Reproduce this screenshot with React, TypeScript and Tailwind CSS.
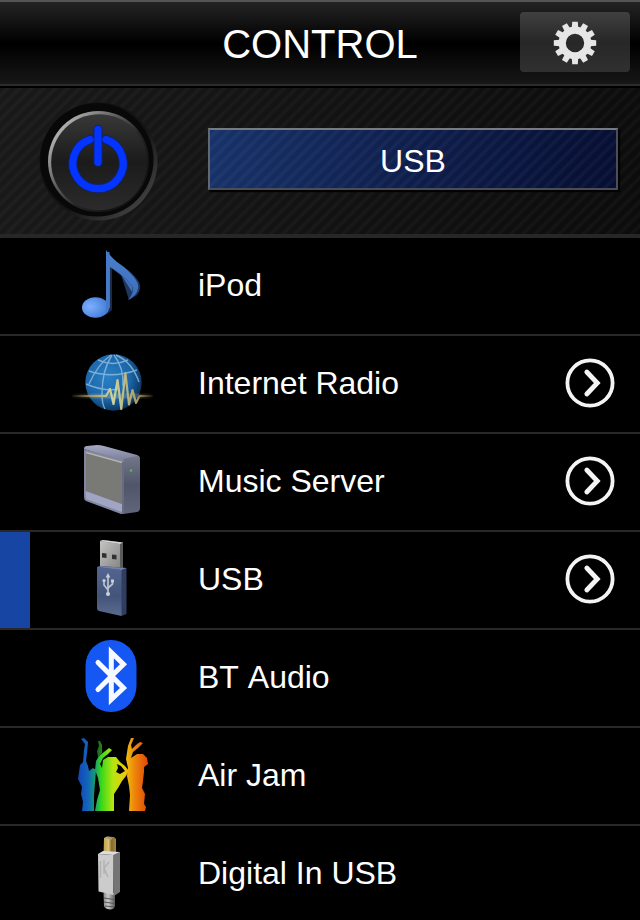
import type { ReactNode } from "react";

interface Source {
  name: string;
  icon: ReactNode;
  more?: boolean;
}

function NoteIcon() {
  return (
    <>
      <defs>
        <linearGradient id="noteFlag" x1="0" y1="0" x2="0" y2="1">
          <stop offset="0" stopColor="#4c80cc" />
          <stop offset="1" stopColor="#3769b8" />
        </linearGradient>
        <radialGradient id="noteHead" cx="0.3" cy="0.45" r="0.75">
          <stop offset="0" stopColor="#7fb0ff" />
          <stop offset="1" stopColor="#3d78d2" />
        </radialGradient>
      </defs>
      <path d="M50 28 L52 29 V72 L47 76 Z" fill="#1b2c4a" />
      <path d="M57 24 Q73 34 79 44 Q82 51 77 57 L69 62 Z" fill="#1f365e" />
      <path
        d="M46 12 Q50 18 57 24 Q70 33 76 42 Q81 50 75 57 Q72 60 68 62 Q75 54 72 48 Q66 39 50 29 L50 70 L46 70 Z"
        fill="url(#noteFlag)"
      />
      <path d="M50 29 Q66 39 72 48 Q73 51 72 54 L62 38 Z" fill="#3e6fb8" />
      <ellipse cx="35.5" cy="69.5" rx="13.5" ry="10.2" fill="url(#noteHead)" />
      <path d="M46 14 H49.5 V70 L46 74 Z" fill="#4679c8" />
    </>
  );
}

function GlobeIcon() {
  return (
    <>
      <defs>
        <radialGradient id="globe" cx="0.4" cy="0.4" r="0.62">
          <stop offset="0" stopColor="#2b80c6" />
          <stop offset="0.65" stopColor="#1c65a8" />
          <stop offset="1" stopColor="#0c365f" />
        </radialGradient>
        <linearGradient id="wave" gradientUnits="userSpaceOnUse" x1="12" y1="0" x2="93" y2="0">
          <stop offset="0" stopColor="#8a7a45" stopOpacity="0.1" />
          <stop offset="0.25" stopColor="#a39b6e" />
          <stop offset="0.5" stopColor="#cdd4a0" />
          <stop offset="0.8" stopColor="#a89e6c" />
          <stop offset="1" stopColor="#8a7a45" stopOpacity="0.1" />
        </linearGradient>
      </defs>
      <circle cx="53.5" cy="46.5" r="28.2" fill="url(#globe)" />
      <g fill="none" stroke="#8fbfe2" strokeWidth="1.4" opacity="0.8">
        <path d="M38 24 Q53 31 68 24" />
        <path d="M29 35 Q52 43 77 34" />
        <path d="M26 48 Q45 56 60 53" />
        <path d="M51 19 Q38 28 29 48" />
        <path d="M52 19 Q42 34 42 58 Q42 68 45 73" />
        <path d="M54 19 Q64 32 63 50" />
        <path d="M56 19 Q72 26 79 46" />
      </g>
      <path d="M12 60 H93" stroke="url(#wave)" strokeWidth="5" opacity="0.3" />
      <path
        d="M12 60 H46 L50 53 L53.5 68 L57.5 44 L61.3 73 L65.4 37 L69 68.5 L72.5 54 L76 67 L79.5 60 H93"
        fill="none"
        stroke="url(#wave)"
        strokeWidth="2.2"
        strokeLinejoin="round"
      />
    </>
  );
}

function ServerIcon() {
  return (
    <>
      <defs>
        <linearGradient id="serverTop" x1="0" y1="0" x2="0" y2="1">
          <stop offset="0" stopColor="#a6a9c4" />
          <stop offset="1" stopColor="#777a94" />
        </linearGradient>
        <linearGradient id="serverSide" x1="0" y1="0" x2="0" y2="1">
          <stop offset="0" stopColor="#737789" />
          <stop offset="0.5" stopColor="#515569" />
          <stop offset="1" stopColor="#62667c" />
        </linearGradient>
      </defs>
      <path d="M24 15 Q24 12 27 12 L37 11 Q40 11 44 12 L77 21 Q80 22 80 25 L64 28 Z" fill="url(#serverTop)" />
      <path d="M62 28 Q64 24 68 24 L77 22 Q80 23 80 27 V74 Q80 77 77 78 L63 80 Z" fill="url(#serverSide)" />
      <path d="M24 15 L61 25 Q64 26 64 29 V79 Q63 80 61 80 L26 67 Q24 66 24 63 Z" fill="#8286a2" />
      <path d="M25.5 57 L62 70 V78 L26 65 Z" fill="#a1a5c4" />
      <path d="M26 18.5 L62 28.5 V70 L26 57 Z" fill="#797976" />
      <path d="M26 18.5 L62 28.5" stroke="#b3b3aa" strokeWidth="1.3" />
      <path d="M63 28 V79" stroke="#4c5065" strokeWidth="1" />
      <circle cx="71" cy="36.5" r="1.3" fill="#4fc04e" />
    </>
  );
}

function UsbStickIcon() {
  return (
    <>
      <defs>
        <linearGradient id="plug" x1="0" y1="0" x2="1" y2="1">
          <stop offset="0" stopColor="#c4c4c2" />
          <stop offset="1" stopColor="#858585" />
        </linearGradient>
        <linearGradient id="stick" x1="0" y1="0" x2="0" y2="1">
          <stop offset="0" stopColor="#546690" />
          <stop offset="0.6" stopColor="#43547a" />
          <stop offset="1" stopColor="#5b6b90" />
        </linearGradient>
      </defs>
      <path d="M40 9 L43 8 L63 10.5 V37 L40 36 Z" fill="#5a5a5a" />
      <path d="M40 9 L60 12 V37 L40 35 Z" fill="url(#plug)" />
      <path d="M40 9 L43 8 L63 10.5 L60 12 Z" fill="#d6d6d4" />
      <path d="M42 21 L46.5 21.5 V26 L42 25.5 Z M52 22.5 L56.5 23 V27.5 L52 27 Z" fill="#303030" />
      <path d="M37 35 L41 34 L66.5 36 V82 L61.5 84 Z" fill="#2f3e60" />
      <path d="M37 35 L61.5 38 V84 L39 79 Q37 78.5 37 76 Z" fill="url(#stick)" />
      <path d="M37 35 L41 34 L66.5 36 L61.5 38 Z" fill="#7182aa" />
      <path
        d="M48 43 V62 M48 58 L44 53 V48.5 M48 56 L52.5 52 V48.5"
        fill="none"
        stroke="#b9c1d0"
        strokeWidth="1.7"
      />
      <path d="M45.6 45.5 L48 41 L50.4 45.5 Z" fill="#c8cfdb" />
      <circle cx="48" cy="62" r="2.1" fill="#c8cfdb" />
      <circle cx="44" cy="48.5" r="1.6" fill="#c8cfdb" />
      <rect x="51" y="47.5" width="3" height="3" fill="#c8cfdb" />
    </>
  );
}

function BluetoothIcon() {
  return (
    <>
      <rect x="25.5" y="10" width="51" height="72" rx="25" ry="26" fill="#1557f2" />
      <path
        d="M38 32.5 L63.5 58 L51.3 69.5 V22.5 L63.5 34.3 L38 59.5"
        fill="none"
        stroke="#f6f9ff"
        strokeWidth="5"
        strokeLinecap="round"
      />
    </>
  );
}

function DancersIcon() {
  return (
    <>
      <defs>
        <linearGradient id="rainbow" gradientUnits="userSpaceOnUse" x1="18" y1="0" x2="88" y2="0">
          <stop offset="0" stopColor="#1245b8" />
          <stop offset="0.14" stopColor="#1464bd" />
          <stop offset="0.24" stopColor="#159a72" />
          <stop offset="0.33" stopColor="#35d81a" />
          <stop offset="0.5" stopColor="#b5e60f" />
          <stop offset="0.67" stopColor="#ecc90d" />
          <stop offset="0.8" stopColor="#ee880b" />
          <stop offset="1" stopColor="#df4808" />
        </linearGradient>
      </defs>
      <g fill="url(#rainbow)">
        <path d="M21 11 L24 10 L28 14 L27 25 L26 33 L28 38 L29 43 L33 40 L36 42 L35 55 L34 67 L34 83 H22 L23 74 L21 66 L22 59 L18 51 L20 37 L23 34 L24 22 L25 16 Z" />
        <path d="M38 13 L40 13 L42 17 L42 25 L38 29 L37 23 L39 18 Z" opacity="0.6" />
        <path d="M35 83 L37 72 L40 62 L38 50 L35 42 L36 33 L39 28 L44 24 L49 20 L52 22 L48 26 L43 30 L40 36 L42 40 L43 32 L48 29 L56 29 L60 34 L65 38 L69 43 L66 48 L62 53 L58 60 L54 66 L54 83 Z M57 36 L58 40 L56 44 L60 46 L65 43 L61 38 Z" fillRule="evenodd" />
        <path d="M66 31 L68 18 L71 10 L74 10 L71 17 L72 21 L76 17 L80 14 L83 15 L78 20 L73 24 L71 30 L77 26 L83 26 L87 30 L88 36 L84 39 L84 44 L83 53 L82 60 L85 66 L84 76 L86 79 L85 83 H69 L70 67 L69 58 L67 48 L68 40 Z" />
      </g>
    </>
  );
}

function CableIcon() {
  return (
    <>
      <defs>
        <linearGradient id="gold" x1="0" y1="0" x2="1" y2="0">
          <stop offset="0" stopColor="#c0a14c" />
          <stop offset="0.4" stopColor="#dcc078" />
          <stop offset="0.65" stopColor="#85692b" />
          <stop offset="1" stopColor="#a5873f" />
        </linearGradient>
        <linearGradient id="cord" x1="0" y1="0" x2="1" y2="0">
          <stop offset="0" stopColor="#8b8b8b" />
          <stop offset="0.4" stopColor="#c9c9c9" />
          <stop offset="1" stopColor="#555555" />
        </linearGradient>
      </defs>
      <path d="M44 12 L47 10.5 L54 11 L56 13 V28 H43.5 Z" fill="url(#gold)" />
      <path d="M45 12 L48 11 L53 11.5 L51 14 Z" fill="#a69b7c" />
      <path d="M43.5 67 H55 V80 Q54 83.5 50 83.5 Q45 83 44 80 Z" fill="url(#cord)" />
      <path d="M44 72 L54 73.5 M44 76 L54 77.5 M45 80 L54 81" stroke="#555555" strokeWidth="1" />
      <path d="M53.5 29 L60 26 V66 L54 70 Z" fill="#757575" />
      <path d="M38 28 L53.5 29 V69 L38.5 65.5 Z" fill="#cccccc" />
      <path d="M38 28 L43 25 L60 26 L53.5 29 Z" fill="#dddddd" />
      <path d="M40.5 35 V52 M49 36 L44 42 L48 51 M44 34 V48" fill="none" stroke="#b2b2b2" strokeWidth="1.5" />
    </>
  );
}

const sources: Source[] = [
  { name: "iPod", icon: <NoteIcon /> },
  { name: "Internet Radio", icon: <GlobeIcon />, more: true },
  { name: "Music Server", icon: <ServerIcon />, more: true },
  { name: "USB", icon: <UsbStickIcon />, more: true },
  { name: "BT Audio", icon: <BluetoothIcon /> },
  { name: "Air Jam", icon: <DancersIcon /> },
  { name: "Digital In USB", icon: <CableIcon /> },
];

const teeth = [0, 30, 60, 90, 120, 150, 180, 210, 240, 270, 300, 330];

function GearIcon() {
  return (
    <svg className="mt-[2px]" width="44" height="44" viewBox="-22 -22 44 44">
      <circle r="12.8" fill="none" stroke="#e6e6e6" strokeWidth="7.2" />
      {teeth.map((angle) => (
        <path key={angle} d="M-3.2 -15 L-2.8 -21.2 H2.8 L3.2 -15 Z" fill="#e6e6e6" transform={`rotate(${angle})`} />
      ))}
    </svg>
  );
}

function PowerButton() {
  return (
    <button type="button" className="ml-[38px] block size-[122px] shrink-0" aria-label="Power">
      <svg width="122" height="122" viewBox="38 101 122 122">
        <defs>
          <linearGradient id="well" x1="0.1" y1="0.1" x2="0.9" y2="0.9">
            <stop offset="0" stopColor="#0b0b0b" />
            <stop offset="0.6" stopColor="#151515" />
            <stop offset="1" stopColor="#454545" />
          </linearGradient>
          <linearGradient id="rim" x1="0.05" y1="0.2" x2="0.75" y2="0.8">
            <stop offset="0" stopColor="#b8b8b8" />
            <stop offset="0.35" stopColor="#6a6a6a" />
            <stop offset="0.7" stopColor="#262626" />
            <stop offset="1" stopColor="#151515" />
          </linearGradient>
          <linearGradient id="knob" x1="0" y1="0" x2="0" y2="1">
            <stop offset="0" stopColor="#383838" />
            <stop offset="0.5" stopColor="#1b1b1b" />
            <stop offset="1" stopColor="#2b2b2b" />
          </linearGradient>
        </defs>
        <circle cx="98.5" cy="161.5" r="59" fill="url(#well)" />
        <circle cx="97" cy="160" r="56.5" fill="#080808" />
        <circle cx="98.5" cy="161.5" r="50.5" fill="url(#rim)" />
        <circle cx="99.2" cy="162.2" r="48" fill="url(#knob)" />
        <g fill="none" strokeLinecap="round">
          <path d="M90 139.5 A25.2 25.2 0 1 0 106 139.5 M98 129.3 V162.3" stroke="#10226b" strokeWidth="9" />
          <path d="M90 139.5 A25.2 25.2 0 1 0 106 139.5 M98 129.3 V162.3" stroke="#0434ff" strokeWidth="7.2" />
        </g>
      </svg>
    </button>
  );
}

function MoreIcon() {
  return (
    <svg
      className="mr-[24px] mb-[2px] shrink-0"
      width="52"
      height="52"
      viewBox="-26 -26 52 52"
      fill="none"
      stroke="#f4f4f4"
    >
      <circle r="22.6" strokeWidth="3.8" />
      <path d="M-3.2 -11 L7.3 0 L-3.2 11" strokeWidth="4.8" strokeLinecap="round" />
    </svg>
  );
}

export default function App() {
  const selected = "USB";

  return (
    <div className="flex h-[920px] w-[640px] flex-col overflow-hidden bg-black font-['Liberation_Sans',sans-serif] text-white [font-kerning:none]">
      <header className="grid h-[86px] shrink-0 grid-cols-[120px_1fr_120px] border-t-2 border-b-2 border-t-[#555555] border-b-[#2b2b2b] bg-[linear-gradient(#242424,#000_50%,#050505_62%,#171717)]">
        <h1 className="col-start-2 pt-[19px] text-center text-[40px] leading-[46px]">CONTROL</h1>
        <button
          type="button"
          aria-label="Settings"
          className="mt-[10px] flex h-[60px] w-[110px] items-center justify-center rounded bg-linear-to-b from-[#404040] via-[#272727] to-[#303030]"
        >
          <GearIcon />
        </button>
      </header>

      <section className="mt-[2px] flex h-[150px] shrink-0 items-start border-b-4 border-[#272727] bg-[repeating-linear-gradient(135deg,transparent_0_3px,rgba(255,255,255,0.03)_5px_6px,transparent_8.5px),linear-gradient(100deg,#191919,#0c0c0c)] pt-[13px]">
        <PowerButton />
        <div className="mt-[27px] ml-[48px] flex h-[62px] w-[410px] items-center justify-center border-2 border-t-[#777b80] border-r-[#4b4e56] border-b-[#4a4d55] border-l-[#63676f] bg-[repeating-linear-gradient(135deg,transparent_0_3px,rgba(255,255,255,0.04)_5px_6px,transparent_8.5px),linear-gradient(100deg,#17336a,#0e1e4c_50%,#060e32)] pt-[3px] text-[32px] leading-9 shadow-[2px_2px_1px_#030303]">
          {selected}
        </div>
      </section>

      <ul className="shrink-0">
        {sources.map(({ name, icon, more }) => (
          <li key={name} className="flex h-[98px] items-center border-b-2 border-[#282828]">
            <span className={name === selected ? "h-full w-[30px] bg-[#1745a4]" : "w-[30px]"} />
            <svg className="ml-[30px] shrink-0" width="100" height="96" viewBox="0 0 100 96">
              {icon}
            </svg>
            <span className="mb-[2px] ml-[38px] flex-1 text-[32px] leading-9">{name}</span>
            {more && <MoreIcon />}
          </li>
        ))}
      </ul>
    </div>
  );
}
